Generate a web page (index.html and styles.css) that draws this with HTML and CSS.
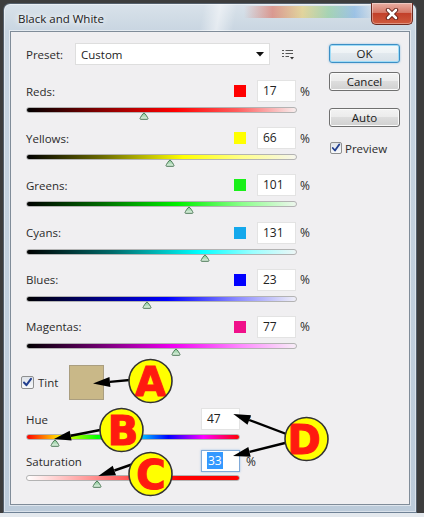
FILE: index.html
```html
<!DOCTYPE html>
<html lang="en">
<head>
    <meta charset="UTF-8">
    <meta name="viewport" content="width=device-width, initial-scale=1.0">
    <title>Black and White</title>
    <link rel="stylesheet" href="styles.css">
</head>
<body>
    <svg class="defs" width="0" height="0">
        <defs>
            <linearGradient id="thumbFill" x1="0" y1="0" x2="0" y2="1">
                <stop offset="0" stop-color="#7fc48e"/>
                <stop offset="1" stop-color="#e6f5e8"/>
            </linearGradient>
            <symbol id="thumb" viewBox="0 0 10 8">
                <path d="M5 1 C6 1 9 6 9 6.6 C9 7.2 8.6 7.3 8 7.3 H2 C1.4 7.3 1 7.2 1 6.6 C1 6 4 1 5 1 Z" fill="url(#thumbFill)" stroke="#4d7a58" stroke-width="1"/>
            </symbol>
            <symbol id="tick" viewBox="0 0 13 13">
                <path d="M3 6.5 L5.4 9.2 L10 2.8" fill="none" stroke="#223f8f" stroke-width="2" stroke-linecap="round" stroke-linejoin="round"/>
            </symbol>
        </defs>
    </svg>

    <div class="window">
        <div class="titlebar">
            <span class="title">Black and White</span>
            <span class="close">
                <svg width="14" height="12" viewBox="0 0 14 12">
                    <path d="M3 2 L11 10 M11 2 L3 10" stroke="#5a1a12" stroke-width="4.4" stroke-linecap="round"/>
                    <path d="M3 2 L11 10 M11 2 L3 10" stroke="#fff" stroke-width="2.6" stroke-linecap="round"/>
                </svg>
            </span>
        </div>

        <div class="client">
            <div class="main">
                <div class="preset">
                    <span class="lbl">Preset:</span>
                    <div class="select">
                        <span>Custom</span>
                        <svg width="8" height="5" viewBox="0 0 8 5"><path d="M0 0 H8 L4 4.5 Z" fill="#111"/></svg>
                    </div>
                    <svg class="list-icon" width="12" height="11" viewBox="0 0 12 11">
                        <path d="M0 1.5 H2 M3.5 1.5 H11 M0 4.5 H2 M3.5 4.5 H11 M0 7.5 H2 M3.5 7.5 H7" stroke="#555" stroke-width="1.2"/>
                        <path d="M8 8 H12 L10 10.5 Z" fill="#333"/>
                    </svg>
                </div>

                <div class="channel reds">
                    <div class="head"><span class="name">Reds:</span><span class="swatch"></span><span class="field">17</span><span class="unit">%</span></div>
                    <div class="track"><svg class="thumb" style="--pos: 43.4%"><use href="#thumb"/></svg></div>
                </div>
                <div class="channel yellows">
                    <div class="head"><span class="name">Yellows:</span><span class="swatch"></span><span class="field">66</span><span class="unit">%</span></div>
                    <div class="track"><svg class="thumb" style="--pos: 53.2%"><use href="#thumb"/></svg></div>
                </div>
                <div class="channel greens">
                    <div class="head"><span class="name">Greens:</span><span class="swatch"></span><span class="field">101</span><span class="unit">%</span></div>
                    <div class="track"><svg class="thumb" style="--pos: 60.2%"><use href="#thumb"/></svg></div>
                </div>
                <div class="channel cyans">
                    <div class="head"><span class="name">Cyans:</span><span class="swatch"></span><span class="field">131</span><span class="unit">%</span></div>
                    <div class="track"><svg class="thumb" style="--pos: 66.2%"><use href="#thumb"/></svg></div>
                </div>
                <div class="channel blues">
                    <div class="head"><span class="name">Blues:</span><span class="swatch"></span><span class="field">23</span><span class="unit">%</span></div>
                    <div class="track"><svg class="thumb" style="--pos: 44.6%"><use href="#thumb"/></svg></div>
                </div>
                <div class="channel magentas">
                    <div class="head"><span class="name">Magentas:</span><span class="swatch"></span><span class="field">77</span><span class="unit">%</span></div>
                    <div class="track"><svg class="thumb" style="--pos: 55.4%"><use href="#thumb"/></svg></div>
                </div>

                <div class="tint">
                    <span class="check"><svg width="13" height="13"><use href="#tick"/></svg></span>
                    <span class="lbl">Tint</span>
                    <span class="tint-swatch"></span>
                </div>

                <div class="hsl">
                    <div class="head"><span class="name">Hue</span><span class="field">47</span><span class="unit">&deg;</span></div>
                    <div class="track hue"><svg class="thumb" style="--pos: 13.1%"><use href="#thumb"/></svg></div>
                    <div class="head sat-head"><span class="name">Saturation</span><span class="field focused"><span class="sel">33</span></span><span class="unit">%</span></div>
                    <div class="track sat"><svg class="thumb" style="--pos: 33%"><use href="#thumb"/></svg></div>
                </div>
            </div>

            <div class="side">
                <span class="btn default">OK</span>
                <span class="btn cancel">Cancel</span>
                <span class="btn auto">Auto</span>
                <div class="preview">
                    <span class="check small"><svg width="12" height="12" viewBox="0 0 13 13"><use href="#tick"/></svg></span>
                    <span>Preview</span>
                </div>
            </div>
        </div>
    </div>

    <!-- callouts drawn over the dialog -->
    <svg class="notes" width="424" height="517" viewBox="0 0 424 517">
        <defs>
            <clipPath id="clipA"><circle cx="150.5" cy="381" r="21.5"/></clipPath>
            <clipPath id="clipB"><circle cx="121.5" cy="430" r="21.5"/></clipPath>
            <clipPath id="clipC"><circle cx="150.5" cy="474" r="21.5"/></clipPath>
            <clipPath id="clipD"><circle cx="306.5" cy="439" r="21.5"/></clipPath>
        </defs>
        <g stroke="#000" stroke-width="2.4">
            <line x1="135" y1="379.5" x2="109.9" y2="381.9"/>
            <line x1="104" y1="429.2" x2="70.7" y2="435.7"/>
            <line x1="136" y1="463" x2="114.4" y2="470.5"/>
            <line x1="289" y1="435" x2="249.2" y2="420"/>
            <line x1="289" y1="442" x2="249.5" y2="451.9"/>
        </g>
        <g fill="#000">
            <polygon points="93,383.5 109.45,376.9 110.4,386.9"/>
            <polygon points="54,439 69.7,430.8 71.6,440.6"/>
            <polygon points="98.3,476 112.7,465.7 116,475.2"/>
            <polygon points="233.3,414 251,415.3 247.5,424.7"/>
            <polygon points="233,456 248.3,447 250.7,456.7"/>
        </g>

        <g class="callout">
            <circle cx="150.5" cy="381" r="21.5" fill="#ffff00"/>
            <text x="150.5" y="395.5" clip-path="url(#clipA)">A</text>
            <circle cx="150.5" cy="381" r="21.5" fill="none" stroke="#333" stroke-width="1.6"/>
        </g>
        <g class="callout">
            <circle cx="121.5" cy="430" r="21.5" fill="#ffff00"/>
            <text x="123" y="444.5" clip-path="url(#clipB)">B</text>
            <circle cx="121.5" cy="430" r="21.5" fill="none" stroke="#333" stroke-width="1.6"/>
        </g>
        <g class="callout">
            <circle cx="150.5" cy="474" r="21.5" fill="#ffff00"/>
            <text x="151" y="488.5" clip-path="url(#clipC)">C</text>
            <circle cx="150.5" cy="474" r="21.5" fill="none" stroke="#333" stroke-width="1.6"/>
        </g>
        <g class="callout">
            <circle cx="306.5" cy="439" r="21.5" fill="#ffff00"/>
            <text x="304" y="453.5" clip-path="url(#clipD)">D</text>
            <circle cx="306.5" cy="439" r="21.5" fill="none" stroke="#333" stroke-width="1.6"/>
        </g>
    </svg>
</body>
</html>
```

FILE: styles.css
```css
* {
    box-sizing: border-box;
}
body {
    margin: 0;
    width: 424px;
    height: 517px;
    position: relative;
    overflow: hidden;
    background: linear-gradient(#3d3d3d 0, #3d3d3d 513px, #e4e9ee 513px);
    font-family: "Open Sans", "Liberation Sans", sans-serif;
    font-size: 11.5px;
    color: #2b2b2b;
}
.defs {
    position: absolute;
}

/* window chrome */
.window {
    margin: 3px 0 0 3px;
    width: 414px;
    height: 510px;
    padding: 0 6px 7px 6px;
    border: 1px solid #55606c;
    border-bottom-color: #6f8296;
    border-radius: 7px 7px 0 0;
    background:
        linear-gradient(90deg, rgba(255,255,255,0), rgba(222,96,74,.55) 22%, rgba(236,204,96,.55) 45%, rgba(120,200,130,.5) 65%, rgba(90,160,226,.45) 85%, rgba(255,255,255,0)) 240px 2px / 130px 12px no-repeat,
        linear-gradient(100deg, rgba(255,255,255,0) 48%, rgba(255,255,255,.5) 52%, rgba(255,255,255,0) 56%) 0 0 / 100% 28px no-repeat,
        linear-gradient(180deg, #d9e2ea 0, #c8d5e1 28px, #bccbda 100%);
    box-shadow: inset 0 0 0 1px rgba(255,255,255,.45);
}
.titlebar {
    height: 27px;
    display: flex;
    align-items: flex-start;
}
.title {
    padding: 7px 0 0 8px;
    line-height: 16px;
    color: #1c1c1c;
    text-shadow: 0 0 5px #fff, 0 0 8px #fff;
}
.close {
    margin-left: auto;
    margin-right: -3px;
    margin-top: -1px;
    width: 42px;
    height: 22px;
    display: flex;
    align-items: center;
    justify-content: center;
    border: 1px solid #6e2a20;
    border-top: none;
    border-radius: 0 0 5px 5px;
    background: linear-gradient(#eab0a4 0, #d57a69 45%, #c2402a 50%, #cf5a3d 100%);
    box-shadow: inset 0 0 0 1px rgba(255,255,255,.35);
}

/* client area */
.client {
    height: 474px;
    border: 1px solid #808c99;
    background: #f0eff1;
    box-shadow: 0 0 0 1px rgba(255,255,255,.5);
    display: grid;
    grid-template-columns: 286px 71px;
    column-gap: 17px;
    padding: 11px 9px 0 15px;
    align-items: start;
}
.main {
    display: flex;
    flex-direction: column;
}
.preset {
    height: 22px;
    display: flex;
    align-items: center;
}
.preset .lbl {
    width: 49px;
}
.select {
    width: 195px;
    height: 22px;
    display: flex;
    align-items: center;
    justify-content: space-between;
    padding: 0 5px 0 5px;
    background: #fff;
    border: 1px solid #dedede;
    color: #222;
}
.list-icon {
    margin-left: 12px;
}

/* channel sliders */
.channel {
    height: 47.2px;
}
.preset + .channel {
    margin-top: 15px;
}
.head {
    height: 22px;
    display: flex;
    align-items: center;
}
.name {
    flex: 1;
}
.swatch {
    width: 12px;
    height: 12px;
    margin-right: 11px;
}
.field {
    width: 39px;
    height: 22px;
    line-height: 20px;
    padding-left: 5px;
    background: #fff;
    border: 1px solid #e3e3e3;
    font-size: 12px;
    color: #222;
}
.unit {
    width: 16px;
    padding-left: 4px;
    font-size: 12px;
}
.track {
    position: relative;
    margin-top: 5px;
    width: 271px;
    height: 6px;
    border: 1px solid #b3b3b3;
    border-radius: 3px;
}
.thumb {
    position: absolute;
    top: 100%;
    left: calc(var(--pos) - 5px);
    width: 10px;
    height: 8px;
}
.reds .swatch { background: #ff0000; }
.reds .track { background: linear-gradient(90deg, #000 0, #7a0000 25%, #ff0000 55%, #ff5c5c 78%, #f7eeee 100%); }
.yellows .swatch { background: #ffff00; }
.yellows .track { background: linear-gradient(90deg, #000 0, #6b6b00 28%, #ffff00 58%, #ffff8a 80%, #f6f6ee 100%); }
.greens .swatch { background: #19f019; }
.greens .track { background: linear-gradient(90deg, #000 0, #006b00 28%, #00f000 56%, #8cff8c 80%, #eef6ee 100%); }
.cyans .swatch { background: #14a8ec; }
.cyans .track { background: linear-gradient(90deg, #000 0, #006b6b 32%, #00ffff 64%, #9affff 84%, #eef6f6 100%); }
.blues .swatch { background: #0000ff; }
.blues .track { background: linear-gradient(90deg, #000 0, #000080 26%, #0000ff 52%, #8a8aff 78%, #efeff7 100%); }
.magentas .swatch { background: #f0108a; }
.magentas .track { background: linear-gradient(90deg, #000 0, #6b006b 26%, #f000f0 54%, #ff8cff 80%, #f7eef7 100%); }

/* tint */
.tint {
    margin-top: 2px;
    height: 35px;
    display: flex;
    align-items: center;
}
.check {
    width: 13px;
    height: 13px;
    border: 1px solid #8e8f8f;
    border-radius: 2px;
    background: linear-gradient(#dfe3e9, #f8f9fb);
    display: flex;
    align-items: center;
    justify-content: center;
}
.check svg {
    flex: none;
}
.tint .check {
    margin-left: -5px;
}
.tint .lbl {
    margin-left: 4px;
}
.tint-swatch {
    width: 35px;
    height: 35px;
    margin-left: 11px;
    background: #c9b888;
    border: 1px solid #aa9e80;
}

.hsl {
    width: 230px;
    margin-top: 8px;
}
.hsl .track {
    width: 214px;
    margin-top: 4px;
}
.hsl .unit {
    padding-left: 6px;
}
.sat-head {
    margin-top: 10px;
}
.hsl .sat {
    margin-top: 3px;
    background: linear-gradient(90deg, #fff 0, #ff0000 72%, #ff0000 100%);
}
.hue {
    background: linear-gradient(90deg, #f00 0, #ff0 16.7%, #0f0 33.3%, #0ff 50%, #00f 66.7%, #f0f 83.3%, #f00 100%);
}
.field.focused {
    border-color: #80aad8;
    box-shadow: 0 0 2px rgba(80, 150, 220, .5);
}
.sel {
    background: #3399ff;
    color: #fff;
    padding: 0 1px;
}

/* buttons column */
.side {
    display: flex;
    flex-direction: column;
    padding-top: 1px;
}
.btn {
    height: 19px;
    line-height: 17px;
    text-align: center;
    color: #1a1a1a;
    border: 1px solid #707070;
    border-radius: 3px;
    background: linear-gradient(#f3f3f3 0, #ebebeb 50%, #dddddd 50%, #d0d0d0 100%);
    box-shadow: inset 0 0 0 1px #fbfbfb;
}
.btn.default {
    border-color: #3c8fc5;
    box-shadow: inset 0 0 0 1px #9fdcf7, 0 0 2px rgba(60, 150, 210, .6);
    background: linear-gradient(#f4f8fa 0, #edf2f5 50%, #e2e9ee 50%, #d8e1e8 100%);
}
.btn.cancel {
    margin-top: 9px;
}
.btn.auto {
    margin-top: 17px;
}
.preview {
    margin-top: 15px;
    height: 12px;
    display: flex;
    align-items: center;
    gap: 3px;
    padding-left: 1px;
}
.check.small {
    width: 12px;
    height: 12px;
}

/* annotation layer */
.notes {
    position: absolute;
    top: 0;
    left: 0;
    pointer-events: none;
}
.callout text {
    font-family: "DejaVu Sans", sans-serif;
    font-weight: bold;
    font-size: 40px;
    fill: #ff1a10;
    stroke: #ff1a10;
    stroke-width: 1.2;
    text-anchor: middle;
}
```
